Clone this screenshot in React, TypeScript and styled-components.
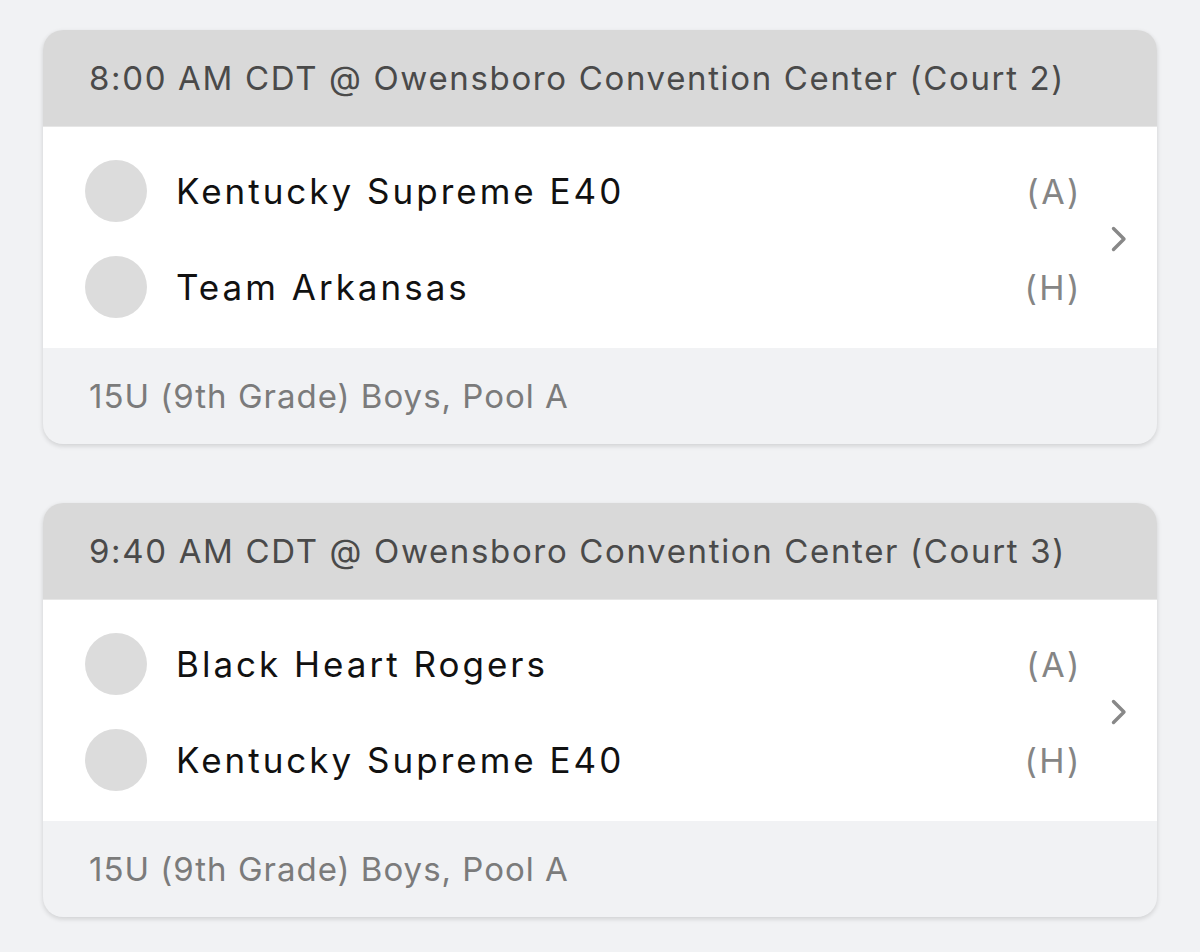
import styled, { createGlobalStyle } from "styled-components";

const GlobalStyle = createGlobalStyle`
  body {
    margin: 0;
    background: #f1f2f4;
    font-family: "Inter", "Noto Sans", sans-serif;
  }
`;

const Page = styled.div`
  display: flex;
  flex-direction: column;
  gap: 59px;
  padding: 30px 43px 36px 43px;
`;

const Card = styled.div`
  border-radius: 20px;
  overflow: hidden;
  background: #f1f2f4;
  box-shadow: 0 2px 5px rgba(0, 0, 0, 0.14);
`;

const Header = styled.div`
  height: 96px;
  display: flex;
  align-items: center;
  padding-left: 46px;
  background: #d9d9d9;
  color: #4a4a4a;
  font-size: 33px;
  letter-spacing: 1.65px;
  border-bottom: 1px solid #e6e6e6;
`;

const Body = styled.div`
  display: flex;
  align-items: center;
  background: #fff;
  padding: 16px 0 13px 42px;
`;

const Teams = styled.div`
  flex: 1;
  display: flex;
  flex-direction: column;
`;

const TeamRow = styled.div`
  height: 96px;
  display: flex;
  align-items: center;
  gap: 29px;
`;

const Avatar = styled.div`
  width: 62px;
  height: 62px;
  border-radius: 50%;
  background: #dcdcdc;
  flex-shrink: 0;
`;

const TeamName = styled.div`
  flex: 1;
  font-size: 35px;
  letter-spacing: 3px;
  color: #111;
`;

const Side = styled.div`
  font-size: 34px;
  letter-spacing: 2.5px;
  margin-right: -4px;
  color: #858585;
`;

const Chevron = styled.div`
  width: 79px;
  display: flex;
  justify-content: center;
  padding-left: 2px;
  box-sizing: border-box;
`;

const Footer = styled.div`
  height: 96px;
  display: flex;
  align-items: center;
  padding-left: 46px;
  color: #7b7b7b;
  font-size: 33px;
  letter-spacing: 1px;
`;

interface IGame {
  time: string;
  place: string;
  away: string;
  home: string;
  division: string;
}

const games: IGame[] = [
  {
    time: "8:00 AM CDT",
    place: "Owensboro Convention Center (Court 2)",
    away: "Kentucky Supreme E40",
    home: "Team Arkansas",
    division: "15U (9th Grade) Boys, Pool A",
  },
  {
    time: "9:40 AM CDT",
    place: "Owensboro Convention Center (Court 3)",
    away: "Black Heart Rogers",
    home: "Kentucky Supreme E40",
    division: "15U (9th Grade) Boys, Pool A",
  },
];

const GameCard = ({ game }: { game: IGame }) => (
  <Card>
    <Header>
      {game.time} @ {game.place}
    </Header>
    <Body>
      <Teams>
        <TeamRow>
          <Avatar />
          <TeamName>{game.away}</TeamName>
          <Side>(A)</Side>
        </TeamRow>
        <TeamRow>
          <Avatar />
          <TeamName>{game.home}</TeamName>
          <Side>(H)</Side>
        </TeamRow>
      </Teams>
      <Chevron>
        <svg width="18" height="28" viewBox="0 0 18 28" fill="none">
          <path
            d="M3.5 3.5l10.5 10.5-10.5 10.5"
            stroke="#888888"
            strokeWidth="3.4"
            strokeLinecap="round"
            strokeLinejoin="round"
          />
        </svg>
      </Chevron>
    </Body>
    <Footer>{game.division}</Footer>
  </Card>
);

const App = () => {
  return (
    <>
      <GlobalStyle />
      <Page>
        {games.map((game) => (
          <GameCard key={game.time} game={game} />
        ))}
      </Page>
    </>
  );
};

export default App;
